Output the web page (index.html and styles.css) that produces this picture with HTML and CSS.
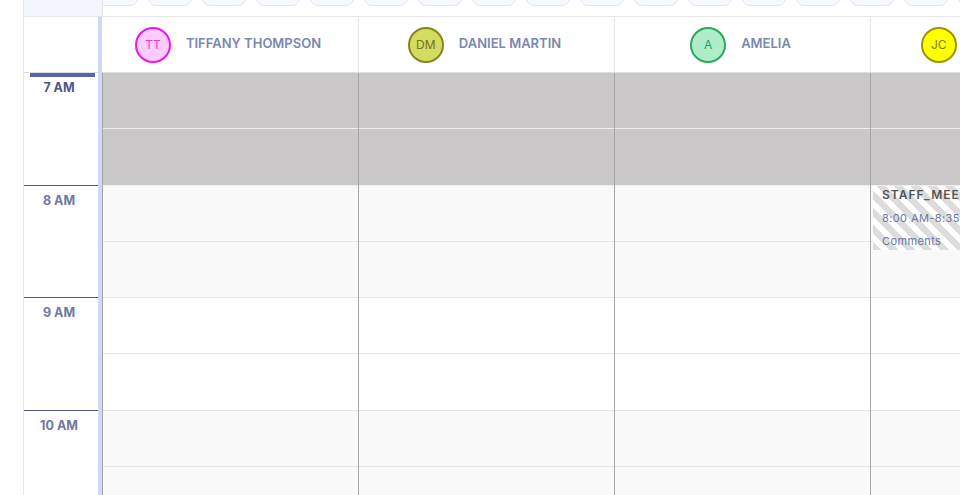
FILE: index.html
```html
<!DOCTYPE html>
<html>
<head>
<meta charset="utf-8">
<link rel="stylesheet" href="styles.css">
</head>
<body>
<div class="cal">
  <div class="strip">
    <div class="strip-corner"></div>
    <div class="pills-wrap">
      <div class="pills">
        <span class="pill"></span><span class="pill"></span><span class="pill"></span><span class="pill"></span>
        <span class="pill"></span><span class="pill"></span><span class="pill"></span><span class="pill"></span>
        <span class="pill"></span><span class="pill"></span><span class="pill"></span><span class="pill"></span>
        <span class="pill"></span><span class="pill"></span><span class="pill"></span><span class="pill"></span>
        <span class="pill"></span><span class="pill"></span>
      </div>
    </div>
  </div>

  <div class="header">
    <div class="h-corner"></div>
    <div class="h-cols">
      <div class="h-cell"><span class="av av-tt">TT</span><span class="name">TIFFANY THOMPSON</span></div>
      <div class="h-cell"><span class="av av-dm">DM</span><span class="name">DANIEL MARTIN</span></div>
      <div class="h-cell"><span class="av av-a">A</span><span class="name">AMELIA</span></div>
      <div class="h-cell"><span class="av av-jc">JC</span><span class="name">JAMES CARTER</span></div>
    </div>
  </div>

  <div class="body">
    <div class="times">
      <div class="hour first"><div class="now-bar"></div><div class="label dark">7 AM</div></div>
      <div class="hour"><div class="label">8 AM</div></div>
      <div class="hour"><div class="label">9 AM</div></div>
      <div class="hour"><div class="label">10 AM</div></div>
    </div>
    <div class="cols">
      <div class="col">
        <div class="slot off"></div><div class="slot off"></div>
        <div class="slot alt"></div><div class="slot alt"></div>
        <div class="slot"></div><div class="slot"></div>
        <div class="slot alt"></div><div class="slot alt"></div>
      </div>
      <div class="col">
        <div class="slot off"></div><div class="slot off"></div>
        <div class="slot alt"></div><div class="slot alt"></div>
        <div class="slot"></div><div class="slot"></div>
        <div class="slot alt"></div><div class="slot alt"></div>
      </div>
      <div class="col">
        <div class="slot off"></div><div class="slot off"></div>
        <div class="slot alt"></div><div class="slot alt"></div>
        <div class="slot"></div><div class="slot"></div>
        <div class="slot alt"></div><div class="slot alt"></div>
      </div>
      <div class="col">
        <div class="slot off"></div><div class="slot off"></div>
        <div class="slot alt"></div><div class="slot alt"></div>
        <div class="slot"></div><div class="slot"></div>
        <div class="slot alt"></div><div class="slot alt"></div>
        <div class="event">
          <div class="ev-title">STAFF_MEETING</div>
          <div class="ev-time">8:00 AM-8:35 AM</div>
          <div class="ev-note">Comments</div>
        </div>
      </div>
    </div>
  </div>
</div>
</body>
</html>
```

FILE: styles.css
```css
* { box-sizing: border-box; }
html, body {
  margin: 0;
  padding: 0;
  width: 960px;
  height: 495px;
  overflow: hidden;
  background: #fff;
  font-family: "Inter", "Noto Sans", sans-serif;
}
.cal {
  margin-left: 23px;
  border-left: 1px solid #e6e7eb;
  height: 495px;
  overflow: hidden;
}
.strip {
  display: flex;
  height: 17px;
  border-bottom: 1px solid #e4e6ec;
}
.strip-corner {
  width: 79px;
  flex: none;
  background: #f4f6fe;
  border-right: 1px solid #e4e6ec;
}
.pills-wrap {
  flex: 1;
  overflow: hidden;
}
.pills {
  display: flex;
  gap: 10px;
  margin-left: -9px;
}
.pill {
  flex: none;
  width: 44px;
  height: 22px;
  margin-top: -16px;
  border: 1px solid #e3e6ee;
  border-radius: 8px;
  background: #f6f8ff;
}
.header {
  display: flex;
  height: 56px;
  border-bottom: 1px solid #dcdcdc;
}
.h-corner {
  width: 78px;
  flex: none;
  border-right: 4px solid #d3d7f7;
  background: #fff;
}
.h-cols {
  display: flex;
  flex: 1;
  overflow: hidden;
}
.h-cell {
  flex: none;
  width: 256px;
  border-left: 1px solid #e6e7eb;
  display: flex;
  align-items: center;
  justify-content: center;
  gap: 15px;
  padding-right: 4px;
}
.h-cell:first-child { border-left: none; }
.av {
  width: 36px;
  height: 36px;
  border-radius: 50%;
  border: 2px solid;
  display: flex;
  align-items: center;
  justify-content: center;
  font-size: 12px;
  font-weight: 400;
  flex: none;
}
.av-tt { background: #ffccff; border-color: #f212f0; color: #e03fdc; }
.av-dm { background: #d3dc5e; border-color: #85861e; color: #727524; }
.av-a  { background: #aeedc8; border-color: #2aa95a; color: #2f9b5a; }
.av-jc { background: #ffff00; border-color: #9b9700; color: #7d7a10; }
.name {
  font-size: 13px;
  font-weight: 600;
  color: #7b87b3;
  white-space: nowrap;
  padding-bottom: 3px;
}
.body {
  display: flex;
}
.times {
  width: 78px;
  flex: none;
  border-right: 4px solid #d3d7f7;
}
.hour {
  height: 112.5px;
  border-bottom: 1px solid #4b5789;
}
.now-bar {
  height: 4px;
  margin: 0 3px 0 6px;
  background: #5563b1;
}
.label {
  padding-top: 7px;
  line-height: 16px;
  text-align: center;
  font-size: 12.5px;
  font-weight: 700;
  color: #6d78a3;
  padding-right: 4px;
}
.label.dark { color: #4c5787; padding-top: 3px; }
.cols {
  display: flex;
  flex: 1;
  overflow: hidden;
}
.col {
  flex: none;
  width: 256px;
  border-left: 1px solid #a6a6a6;
  position: relative;
}
.slot {
  height: 56.25px;
  border-bottom: 1px solid #e6e6e6;
  background: #fff;
}
.slot.alt { background: #f9f9f9; }
.slot.off { background: #c9c7c8; border-bottom-color: #eeeeee; }
.event {
  position: absolute;
  left: 2px;
  top: 113px;
  width: 230px;
  height: 64px;
  padding: 1px 9px;
  background: repeating-linear-gradient(45deg, #dcdcdc 0 6px, #ffffff 6px 12px);
  overflow: hidden;
}
.ev-title {
  font-size: 12px;
  font-weight: 600;
  color: #555;
  line-height: 16px;
  letter-spacing: 1px;
}
.ev-time, .ev-note {
  font-size: 11px;
  color: #6a77a6;
  line-height: 23px;
  letter-spacing: 0.4px;
}
.ev-time { margin-top: 4px; }
```
